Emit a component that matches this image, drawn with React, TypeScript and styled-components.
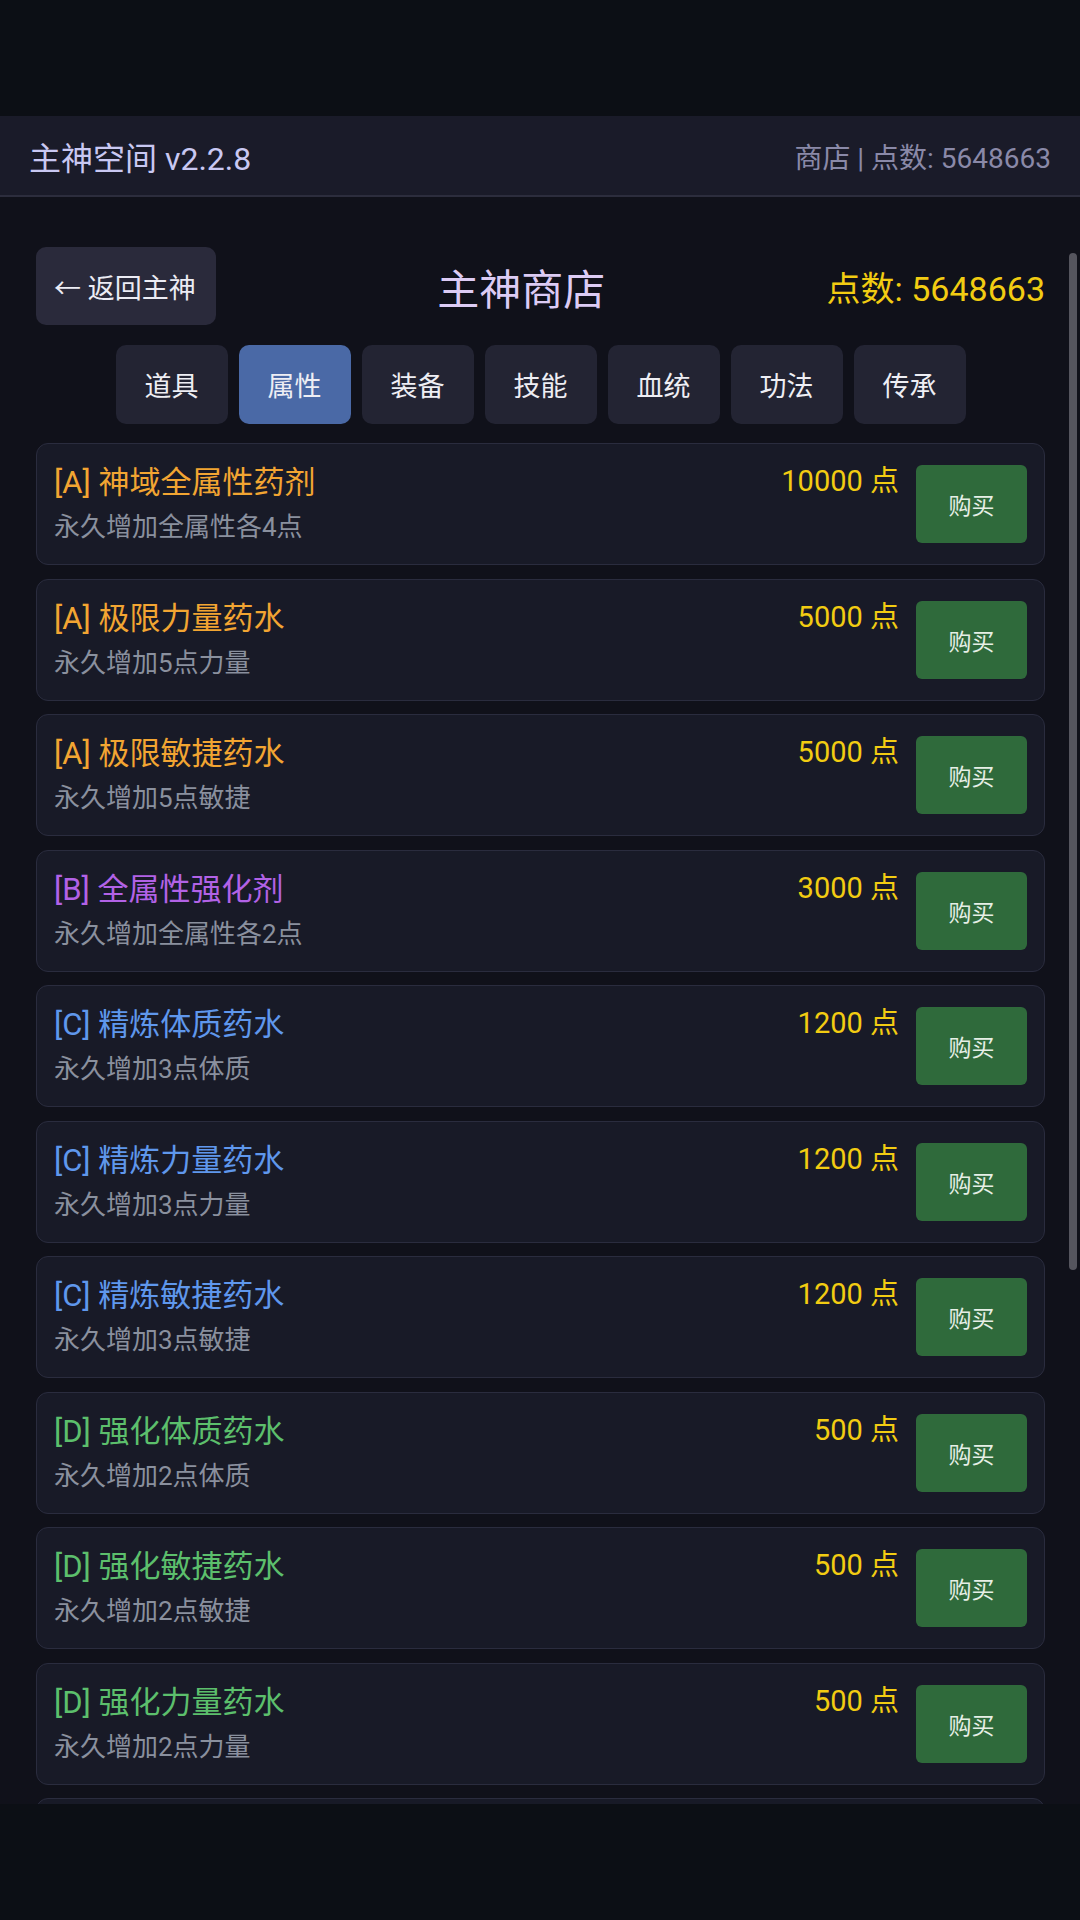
import React, {useState} from 'react';
import styled, {createGlobalStyle} from 'styled-components';

const GlobalStyle = createGlobalStyle`
  html, body {
    margin: 0;
    padding: 0;
    background: #0c0f15;
  }
  * {
    box-sizing: border-box;
  }
  body {
    font-family: Roboto, "Noto Sans CJK SC", sans-serif;
  }
`;

const Screen = styled.div`
  padding-top: 116px;
`;

const Frame = styled.div`
  height: 1688px;
  display: flex;
  flex-direction: column;
  background: #10111a;
`;

const TopBar = styled.header`
  height: 81px;
  flex-shrink: 0;
  display: flex;
  align-items: center;
  justify-content: space-between;
  padding: 0 29px;
  background: #1a1b29;
  border-bottom: 2px solid #2c2d3d;
`;

const AppTitle = styled.div`
  font-size: 32px;
  color: #c9c8f2;
`;

const AppStatus = styled.div`
  font-size: 28px;
  color: #8a89a8;
`;

const Main = styled.main`
  position: relative;
  flex: 1;
  min-height: 0;
  display: flex;
  flex-direction: column;
  padding-top: 50px;
`;

const Scroller = styled.div`
  flex: 1;
  min-height: 0;
  overflow-y: auto;
  scrollbar-width: none;
  padding: 0 35px 24px 36px;
`;

// the list's scroll thumb, drawn over the right edge
const ScrollThumb = styled.div`
  position: absolute;
  top: 56px;
  right: 3px;
  width: 8px;
  height: 1017px;
  border-radius: 4px;
  background: #55555e;
`;

const ShopHead = styled.div`
  display: flex;
  align-items: center;
  justify-content: space-between;
`;

const BackButton = styled.button`
  height: 78px;
  padding: 0 20px 0 18px;
  border: none;
  border-radius: 10px;
  background: #2a2a3b;
  color: #ececf4;
  font-family: inherit;
  font-size: 27px;
`;

const ShopTitle = styled.h1`
  margin: 0;
  font-size: 42px;
  font-weight: 400;
  color: #dccbf4;
`;

const Points = styled.div`
  font-size: 34px;
  color: #f2cc12;
`;

const Tabs = styled.nav`
  display: flex;
  justify-content: center;
  gap: 11px;
  margin: 20px 0 19px;
`;

const Tab = styled.button<{ $active?: boolean }>`
  height: 79px;
  padding: 0 29px;
  border: none;
  border-radius: 10px;
  background: ${p => p.$active ? '#4a69a6' : '#232433'};
  color: #eeeef4;
  font-family: inherit;
  font-size: 27px;
`;

const List = styled.div`
  display: flex;
  flex-direction: column;
  gap: 13.5px;
`;

const Card = styled.div`
  display: flex;
  align-items: center;
  padding: 21px 17px;
  background: #181a27;
  border: 1px solid #2a2c3e;
  border-radius: 12px;
`;

const Info = styled.div`
  flex: 1;
  min-width: 0;
`;

const Name = styled.div<{ $color: string }>`
  font-size: 31px;
  line-height: 36px;
  color: ${p => p.$color};
`;

const Desc = styled.div`
  margin-top: 10px;
  font-size: 26px;
  line-height: 32px;
  color: #8a909e;
`;

const Side = styled.div`
  display: flex;
  align-items: flex-start;
  gap: 17px;
`;

const Price = styled.div`
  font-size: 29px;
  line-height: 32px;
  color: #f2cc12;
`;

const BuyButton = styled.button`
  width: 111px;
  height: 78px;
  border: none;
  border-radius: 6px;
  background: #2f6a3b;
  color: #e6efe6;
  font-family: inherit;
  font-size: 23px;
`;

const rankColors: { [K: string]: string } = {
  A: '#f2a532',
  B: '#b262e6',
  C: '#5f97ec',
  D: '#5cbf6c',
  E: '#a8acb8',
};

type Item = { rank: string; name: string; desc: string; price: number };

const items: Item[] = [
  {rank: 'A', name: '神域全属性药剂', desc: '永久增加全属性各4点', price: 10000},
  {rank: 'A', name: '极限力量药水', desc: '永久增加5点力量', price: 5000},
  {rank: 'A', name: '极限敏捷药水', desc: '永久增加5点敏捷', price: 5000},
  {rank: 'B', name: '全属性强化剂', desc: '永久增加全属性各2点', price: 3000},
  {rank: 'C', name: '精炼体质药水', desc: '永久增加3点体质', price: 1200},
  {rank: 'C', name: '精炼力量药水', desc: '永久增加3点力量', price: 1200},
  {rank: 'C', name: '精炼敏捷药水', desc: '永久增加3点敏捷', price: 1200},
  {rank: 'D', name: '强化体质药水', desc: '永久增加2点体质', price: 500},
  {rank: 'D', name: '强化敏捷药水', desc: '永久增加2点敏捷', price: 500},
  {rank: 'D', name: '强化力量药水', desc: '永久增加2点力量', price: 500},
  {rank: 'E', name: '基础体质药水', desc: '永久增加1点体质', price: 200},
  {rank: 'E', name: '基础敏捷药水', desc: '永久增加1点敏捷', price: 200},
  {rank: 'E', name: '基础力量药水', desc: '永久增加1点力量', price: 200},
  {rank: 'E', name: '基础精神药水', desc: '永久增加1点精神', price: 200},
  {rank: 'E', name: '初级体质药水', desc: '永久增加1点体质', price: 100},
  {rank: 'E', name: '初级力量药水', desc: '永久增加1点力量', price: 100},
];

const tabs = ['道具', '属性', '装备', '技能', '血统', '功法', '传承'];

const points = 5648663;

const App = () => {
  const [tab, setTab] = useState('属性');

  return (
    <Screen>
      <GlobalStyle/>
      <Frame>
        <TopBar>
          <AppTitle>主神空间 v2.2.8</AppTitle>
          <AppStatus>商店 | 点数: {points}</AppStatus>
        </TopBar>

        <Main>
          <Scroller>
            <ShopHead>
              <BackButton>← 返回主神</BackButton>
              <ShopTitle>主神商店</ShopTitle>
              <Points>点数: {points}</Points>
            </ShopHead>

            <Tabs>
              {tabs.map(t => <Tab key={t} $active={t === tab} onClick={() => setTab(t)}>{t}</Tab>)}
            </Tabs>

            <List>
              {items.map(item => (
                <Card key={item.name + item.price}>
                  <Info>
                    <Name $color={rankColors[item.rank]}>[{item.rank}] {item.name}</Name>
                    <Desc>{item.desc}</Desc>
                  </Info>
                  <Side>
                    <Price>{item.price} 点</Price>
                    <BuyButton>购买</BuyButton>
                  </Side>
                </Card>
              ))}
            </List>
          </Scroller>
          <ScrollThumb/>
        </Main>
      </Frame>
    </Screen>
  );
};

export default App;
